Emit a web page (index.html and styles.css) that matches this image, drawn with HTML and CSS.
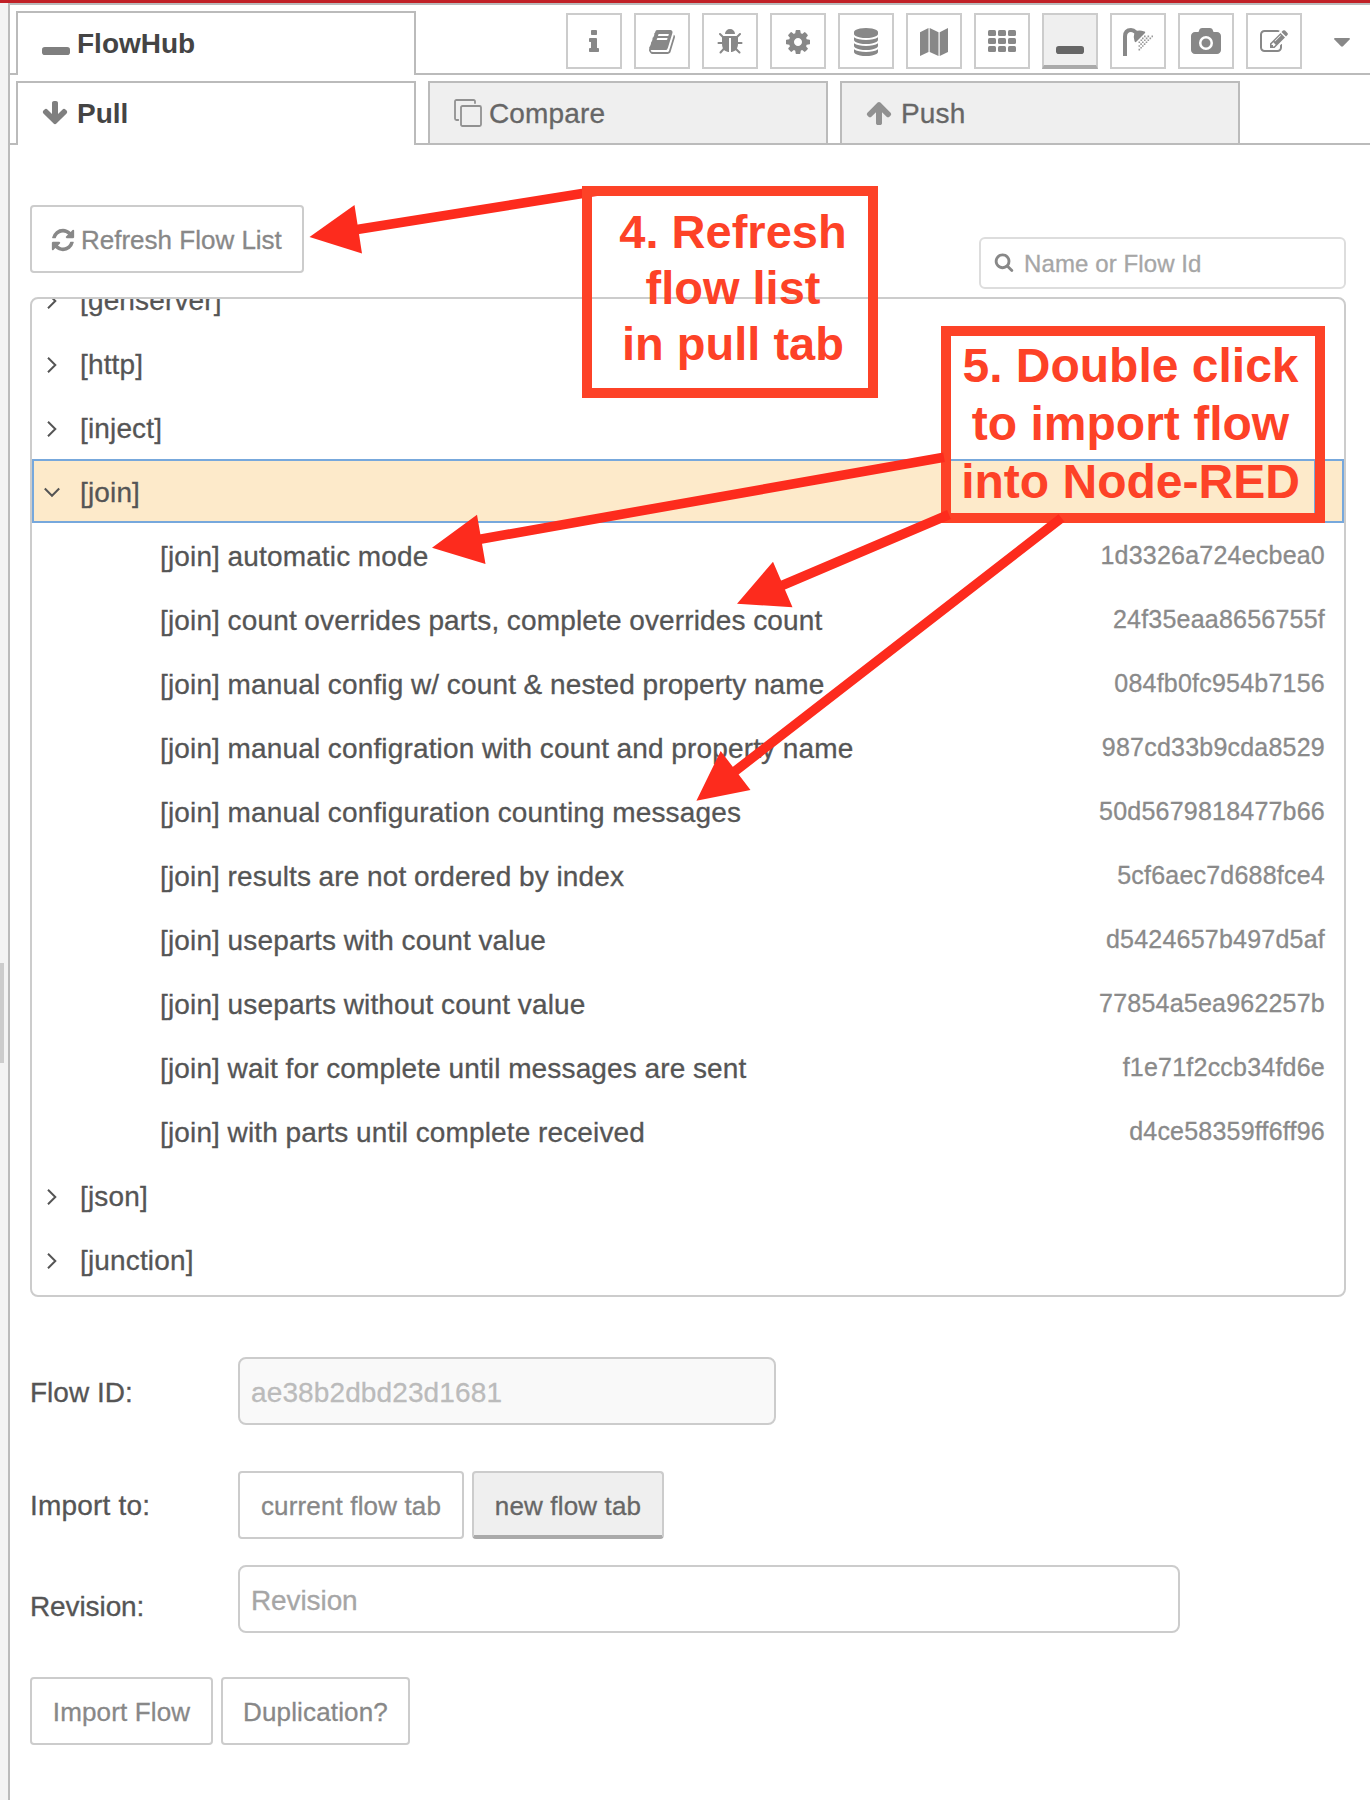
FILE: index.html
```html
<!DOCTYPE html>
<html lang="en">
<head>
<meta charset="utf-8">
<title>FlowHub</title>
<link rel="stylesheet" href="styles.css">
</head>
<body>
<div class="topbar"></div>
<div class="workspace">
  <div class="separator"><div class="grip"></div></div>
  <main class="sidebar">
    <header class="tabbar">
      <div class="tab active"><svg class="icon" viewBox="0 0 28 28"><rect x="0" y="18" width="28" height="8" rx="2.8"/></svg><span>FlowHub</span></div>
      <nav class="tools">
        <a class="tool"><svg class="icon" viewBox="0 0 1792 1792"><path d="M1216 1344v128q0 26-19 45t-45 19h-512q-26 0-45-19t-19-45v-128q0-26 19-45t45-19h64v-384h-64q-26 0-45-19t-19-45v-128q0-26 19-45t45-19h384q26 0 45 19t19 45v576h64q26 0 45 19t19 45zm-128-1152v192q0 26-19 45t-45 19h-256q-26 0-45-19t-19-45v-192q0-26 19-45t45-19h256q26 0 45 19t19 45z"/></svg></a>
        <a class="tool"><svg class="icon" viewBox="0 0 1792 1792"><path d="M1703 478q40 57 18 129l-275 906q-19 64-76.500 107.500t-122.500 43.500h-923q-77 0-148.500-53.500t-99.500-131.500q-24-67-2-127 0-4 3-27t4-37q1-8-3-21.500t-3-19.500q2-11 8-21t16.500-23.500 16.500-23.500q23-38 45-91.500t30-91.500q3-10 .5-30t-.5-28q3-11 17-28t17-23q21-36 42-92t25-90q1-9-2.500-32t.5-28q4-13 22-30.500t22-22.500q19-26 42.500-84.500t27.500-96.500q1-8-3-25.500t-2-26.500q2-8 9-18t18-23 17-21q8-12 16.500-30.500t15-35 16-36 19.500-32 26.500-23.500 36-11.500 47.500 5.500l-1 3q38-9 51-9h761q74 0 114 56t18 130l-274 906q-36 119-71.500 153.500t-128.500 34.500h-869q-27 0-38 15-11 16-1 43 24 70 144 70h923q29 0 56-15.500t35-41.500l300-987q7-22 5-57 38 15 59 43zm-1064 2q-4 13 2 22.500t20 9.500h608q13 0 25.500-9.500t16.500-22.500l21-64q4-13-2-22.500t-20-9.500h-608q-13 0-25.500 9.500t-16.500 22.500zm-83 256q-4 13 2 22.500t20 9.500h608q13 0 25.500-9.500t16.500-22.500l21-64q4-13-2-22.500t-20-9.500h-608q-13 0-25.500 9.500t-16.500 22.500z"/></svg></a>
        <a class="tool"><svg class="icon" viewBox="0 0 1792 1792"><path d="M1696 960q0 26-19 45t-45 19h-224q0 171-67 290l208 209q19 19 19 45t-19 45q-18 19-45 19t-45-19l-198-197q-5 5-15 13t-42 28.500-65 36.500-82 29-97 13v-896h-128v896q-51 0-101.500-13.500t-87-33-66-39-43.500-32.500l-15-14-183 207q-20 21-48 21-24 0-43-16-19-18-20.500-44.500t15.500-46.500l202-227q-58-114-58-274h-224q-26 0-45-19t-19-45 19-45 45-19h224v-294l-173-173q-19-19-19-45t19-45 45-19 45 19l173 173h844l173-173q19-19 45-19t45 19 19 45-19 45l-173 173v294h224q26 0 45 19t19 45zm-480-576h-640q0-133 93.500-226.500t226.500-93.500 226.500 93.500 93.500 226.500z"/></svg></a>
        <a class="tool"><svg class="icon" viewBox="0 0 1792 1792"><path d="M1152 896q0-106-75-181t-181-75-181 75-75 181 75 181 181 75 181-75 75-181zm512-109v222q0 12-8 23t-20 13l-185 28q-19 54-39 91 35 50 107 138 10 12 10 25t-9 23q-27 37-99 108t-94 71q-12 0-26-9l-138-108q-44 23-91 38-16 136-29 186-7 28-36 28h-222q-14 0-24.500-8.500t-11.500-21.500l-28-184q-49-16-90-37l-141 107q-10 9-25 9-14 0-25-11-126-114-165-168-7-10-7-23 0-12 8-23 15-21 51-66.500t54-70.500q-27-50-41-99l-183-27q-13-2-21-12.500t-8-23.500v-222q0-12 8-23t19-13l186-28q14-46 39-92-40-57-107-138-10-12-10-24 0-10 9-23 26-36 98.500-107.500t94.500-71.500q13 0 26 10l138 107q44-23 91-38 16-136 29-186 7-28 36-28h222q14 0 24.500 8.500t11.500 21.500l28 184q49 16 90 37l142-107q9-9 24-9 13 0 25 10 129 119 165 170 7 8 7 22 0 12-8 23-15 21-51 66.500t-54 70.500q26 50 41 98l183 28q13 2 21 12.500t8 23.500z"/></svg></a>
        <a class="tool"><svg class="icon" viewBox="0 0 1792 1792"><path d="M896 768q237 0 443-43t325-127v170q0 69-103 128t-280 93.500-385 34.500-385-34.500-280-93.500-103-128v-170q119 84 325 127t443 43zm0 768q237 0 443-43t325-127v170q0 69-103 128t-280 93.500-385 34.500-385-34.500-280-93.500-103-128v-170q119 84 325 127t443 43zm0-384q237 0 443-43t325-127v170q0 69-103 128t-280 93.500-385 34.500-385-34.500-280-93.500-103-128v-170q119 84 325 127t443 43zm0-1152q208 0 385 34.500t280 93.500 103 128v128q0 69-103 128t-280 93.500-385 34.500-385-34.500-280-93.500-103-128v-128q0-69 103-128t280-93.500 385-34.500z"/></svg></a>
        <a class="tool"><svg class="icon" viewBox="0 0 28 28"><path d="M0 4.300L8.500 0V24L0 28zM9.700 0L18.500 4.300V28L9.700 24zM19.700 4.300L28 0V24L19.700 28z"/></svg></a>
        <a class="tool"><svg class="icon" viewBox="0 0 28 28"><rect x="0" y="2" width="8" height="6" rx="1.500"/><rect x="10" y="2" width="8" height="6" rx="1.500"/><rect x="20" y="2" width="8" height="6" rx="1.500"/><rect x="0" y="10" width="8" height="6" rx="1.500"/><rect x="10" y="10" width="8" height="6" rx="1.500"/><rect x="20" y="10" width="8" height="6" rx="1.500"/><rect x="0" y="18" width="8" height="6" rx="1.500"/><rect x="10" y="18" width="8" height="6" rx="1.500"/><rect x="20" y="18" width="8" height="6" rx="1.500"/></svg></a>
        <a class="tool selected"><svg class="icon" viewBox="0 0 28 28"><rect x="0" y="18" width="28" height="8" rx="2.800"/></svg></a>
        <a class="tool"><svg class="icon wide" viewBox="0 0 30 28"><path d="M0 28V8.500Q0 0 8 0Q11.500 0 14 2.800Q17.500 2 20.500 3.200Q22.800 3.300 22 5L13 14Q11.800 14.500 11.500 13Q10 9.500 11.300 5.500Q10 4 8 4Q4 4 4 8.500V28z"/><path d="M21 7.600h1.600v1.600h-1.600zM24.500 7.600h1.600v1.600h-1.600zM28.500 7.600h1.600v1.600h-1.600zM19 9.600h1.600v1.600h-1.600zM22.800 9.600h1.600v1.600h-1.600zM26.500 9.600h1.600v1.600h-1.600zM17.500 11.500h1.600v1.600h-1.600zM21 11.500h1.600v1.600h-1.600zM24.500 11.500h1.600v1.600h-1.600zM15.500 13.400h1.600v1.600h-1.600zM19 13.400h1.600v1.600h-1.600zM22.700 13.400h1.600v1.600h-1.600zM17.300 15.300h1.600v1.600h-1.600zM20.800 15.300h1.600v1.600h-1.600zM15.500 17.200h1.600v1.600h-1.600zM19 17.200h1.600v1.600h-1.600zM17.300 19h1.600v1.600h-1.600zM15.500 20.800h1.600v1.600h-1.600z" opacity=".85"/></svg></a>
        <a class="tool"><svg class="icon wide" viewBox="0 0 1920 1792"><path d="M960 672q119 0 203.500 84.500t84.500 203.500-84.500 203.500-203.500 84.500-203.500-84.500-84.500-203.500 84.500-203.500 203.500-84.500zm704-416q106 0 181 75t75 181v896q0 106-75 181t-181 75h-1408q-106 0-181-75t-75-181v-896q0-106 75-181t181-75h224l51-136q19-49 69.500-84.500t103.500-35.500h512q53 0 103.500 35.500t69.500 84.500l51 136h224zm-704 1152q185 0 316.500-131.500t131.500-316.500-131.500-316.500-316.500-131.500-316.500 131.500-131.500 316.500 131.500 316.500 316.500 131.500z"/></svg></a>
        <a class="tool"><svg class="icon" viewBox="0 0 1792 1792"><path d="M888 1184l116-116-152-152-116 116v56h96v96h56zm440-720q-16-16-33 1l-350 350q-17 17-1 33t33-1l350-350q17-17 1-33zm80 594v190q0 119-84.500 203.500t-203.500 84.500h-832q-119 0-203.500-84.500t-84.500-203.500v-832q0-119 84.500-203.500t203.500-84.500h832q63 0 117 25 15 7 18 23 3 17-9 29l-49 49q-14 14-32 8-23-6-45-6h-832q-66 0-113 47t-47 113v832q0 66 47 113t113 47h832q66 0 113-47t47-113v-126q0-13 9-22l64-64q15-15 35-7t20 29zm-96-738l288 288-672 672h-288v-288zm444 132l-92 92-288-288 92-92q28-28 68-28t68 28l152 152q28 28 28 68t-28 68z"/></svg></a>
        <svg class="caret" viewBox="0 0 16 9"><path d="M1 0H15Q16.500 .4 15.600 1.500L9 8.300Q8 9.200 7 8.300L.4 1.500Q-.5 .4 1 0z"/></svg>
      </nav>
    </header>
    <div class="tabbar subtabs">
      <div class="tab active arrow"><svg class="icon" viewBox="0 0 1792 1792"><path d="M1675 832q0 53-37 90l-651 652q-39 37-91 37-53 0-90-37l-651-652q-38-36-38-90 0-53 38-91l74-75q39-37 91-37 53 0 90 37l294 294v-704q0-52 38-90t90-38h128q52 0 90 38t38 90v704l294-294q37-37 90-37 52 0 91 37l75 75q37 39 37 91z"/></svg><span>Pull</span></div>
      <div class="tab"><svg class="icon clone" viewBox="0 0 28 28"><path d="M21 4.700V2.500Q21 1 19.500 1H2.500Q1 1 1 2.500V19.500Q1 21 2.500 21H4.900"/><rect x="7" y="7" width="20" height="20" rx="1.500"/></svg><span>Compare</span></div>
      <div class="tab arrow"><svg class="icon" viewBox="0 0 1792 1792"><path d="M1675 971q0 51-37 90l-75 75q-38 38-91 38-54 0-90-38l-294-293v704q0 52-37.500 84.500t-90.500 32.500h-128q-53 0-90.500-32.500t-37.500-84.500v-704l-294 293q-36 38-90 38t-90-38l-75-75q-38-38-38-90 0-53 38-91l651-651q35-37 90-37 54 0 91 37l651 651q37 39 37 91z"/></svg><span>Push</span></div>
    </div>
    <section class="content">
      <div class="listhead">
        <button class="btn refresh"><svg viewBox="0 0 1792 1792"><path d="M1639 1056q0 5-1 7-64 268-268 434.500t-478 166.500q-146 0-282.500-55t-243.500-157l-129 129q-19 19-45 19t-45-19-19-45v-448q0-26 19-45t45-19h448q26 0 45 19t19 45-19 45l-137 137q71 66 161 102t187 36q134 0 250-65t186-179q11-17 53-117 8-23 30-23h192q13 0 22.500 9.500t9.500 22.500zm25-800v448q0 26-19 45t-45 19h-448q-26 0-45-19t-19-45 19-45l138-138q-148-137-349-137-134 0-250 65t-186 179q-11 17-53 117-8 23-30 23h-199q-13 0-22.500-9.500t-9.500-22.500v-7q65-268 270-434.500t480-166.500q146 0 284 55.500t245 156.500l130-129q19-19 45-19t45 19 19 45z"/></svg><span>Refresh Flow List</span></button>
        <label class="search"><svg viewBox="0 0 1792 1792"><path d="M1216 832q0-185-131.500-316.500t-316.500-131.500-316.500 131.500-131.500 316.500 131.500 316.500 316.500 131.500 316.500-131.500 131.500-316.500zm512 832q0 52-38 90t-90 38q-54 0-90-38l-343-342q-179 124-399 124-143 0-273.500-55.500t-225-150-150-225-55.500-273.500 55.500-273.500 150-225 225-150 273.500-55.500 273.500 55.500 225 150 150 225 55.500 273.500q0 220-124 399l343 343q37 37 37 90z"/></svg><input type="text" placeholder="Name or Flow Id"></label>
      </div>
      <div class="list">
        <div class="rows">
          <div class="row"><svg class="chev" viewBox="0 0 16 16"><path d="M4 .8L11.300 8L4 15.200"/></svg><span>[genserver]</span></div>
          <div class="row"><svg class="chev" viewBox="0 0 16 16"><path d="M4 .8L11.300 8L4 15.200"/></svg><span>[http]</span></div>
          <div class="row"><svg class="chev" viewBox="0 0 16 16"><path d="M4 .8L11.300 8L4 15.200"/></svg><span>[inject]</span></div>
          <div class="row current"><div class="label"><svg class="chev" viewBox="0 0 16 16"><path d="M.8 3.500L8 10.800L15.200 3.500"/></svg><span>[join]</span></div></div>
          <div class="row item"><span>[join] automatic mode</span><em>1d3326a724ecbea0</em></div>
          <div class="row item"><span>[join] count overrides parts, complete overrides count</span><em>24f35eaa8656755f</em></div>
          <div class="row item"><span>[join] manual config w/ count &amp; nested property name</span><em>084fb0fc954b7156</em></div>
          <div class="row item"><span>[join] manual configration with count and property name</span><em>987cd33b9cda8529</em></div>
          <div class="row item"><span>[join] manual configuration counting messages</span><em>50d5679818477b66</em></div>
          <div class="row item"><span>[join] results are not ordered by index</span><em>5cf6aec7d688fce4</em></div>
          <div class="row item"><span>[join] useparts with count value</span><em>d5424657b497d5af</em></div>
          <div class="row item"><span>[join] useparts without count value</span><em>77854a5ea962257b</em></div>
          <div class="row item"><span>[join] wait for complete until messages are sent</span><em>f1e71f2ccb34fd6e</em></div>
          <div class="row item"><span>[join] with parts until complete received</span><em>d4ce58359ff6ff96</em></div>
          <div class="row"><svg class="chev" viewBox="0 0 16 16"><path d="M4 .8L11.300 8L4 15.200"/></svg><span>[json]</span></div>
          <div class="row"><svg class="chev" viewBox="0 0 16 16"><path d="M4 .8L11.300 8L4 15.200"/></svg><span>[junction]</span></div>
        </div>
      </div>
      <form class="form">
        <div class="field flowid"><label>Flow ID:</label><input type="text" value="ae38b2dbd23d1681" disabled></div>
        <div class="field importto"><label>Import to:</label><div class="group"><button type="button" class="btn cur">current flow tab</button><button type="button" class="btn new pressed">new flow tab</button></div></div>
        <div class="field revision"><label>Revision:</label><input type="text" placeholder="Revision"></div>
        <div class="group actions"><button type="button" class="btn imp">Import Flow</button><button type="button" class="btn dup">Duplication?</button></div>
      </form>
    </section>
  </main>
</div>
<svg class="arrows" viewBox="0 0 1370 1800"><path class="shaft" d="M357 229.500L598 191"/><path class="head" d="M309.500 237L354.500 205L362 253.500z"/></svg>
<div class="note note4">4. Refresh<br>flow list<br>in pull tab</div>
<div class="note note5">5. Double click<br>to import flow<br>into Node-RED</div>
<svg class="arrows" viewBox="0 0 1370 1800">
  <path class="shaft" d="M480 539.300L944 457.200M782 585.500L949 514.500M734 772L1061.500 518"/>
  <path class="head" d="M432 547.700L477 514.700L485.500 564zM737 603.700L773 561.700L792.500 607.300zM696.400 800.700L720.700 751L750.500 790z"/>
</svg>
</body>
</html>
```
FILE: styles.css
```css
* { box-sizing: border-box; }
body {
  margin: 0;
  height: 1800px;
  overflow: hidden;
  position: relative;
  background: #fff;
  color: #555;
  font: 28px "Liberation Sans", Arial, sans-serif;
  letter-spacing: .15px;
  -webkit-text-stroke-width: .3px;
}
.topbar { height: 3px; background: #c12127; }
.workspace { display: flex; height: 1797px; }
.separator { width: 8px; background: #f3f3f3; }
.grip { width: 4px; height: 100px; margin-top: 960px; background: #ccc; }
.sidebar { flex: 1; border-left: 2px solid #bbb; border-top: 2px solid #bbb; }

.tabbar {
  display: flex;
  height: 70px;
  padding: 6px 0 0 6px;
  border-bottom: 2px solid #bbb;
}
.subtabs { gap: 12px; }
.tab {
  display: flex;
  width: 400px;
  height: 62px;
  padding-left: 24px;
  border: 2px solid #bbb;
  border-bottom: 0;
  background: #efefef;
  color: #666;
  line-height: 62px;
}
.tab.active {
  height: 64px;
  background: #fff;
  color: #444;
  font-weight: bold;
  letter-spacing: 0;
  -webkit-text-stroke-width: 0;
}
.tab span { margin-left: 7px; }
.tab .icon { margin-top: 16px; fill: #919191; }
.tab.active .icon { fill: #7f7f7f; }
.tab.arrow { padding-left: 23px; }
.tab.arrow span { margin-left: 8px; }
.icon { width: 28px; height: 28px; fill: #888; flex: none; }
.icon.wide { width: 30px; }
.tab .clone { fill: none; stroke: #919191; stroke-width: 1.8; }

.tools { display: flex; gap: 12px; margin: 2px 0 0 150px; }
.tool {
  display: flex;
  justify-content: center;
  width: 56px;
  height: 56px;
  padding-top: 13px;
  border: 2px solid #ccc;
  background: #fff;
}
.tool.selected { background: #efefef; border-bottom: 4px solid #aaa; }
.tool.selected .icon { fill: #666; }
.caret { width: 16px; height: 9px; margin: 25px 0 0 20px; fill: #888; }

.content { padding: 60px 24px 0 20px; }
.listhead { display: flex; justify-content: space-between; height: 92px; }
.btn {
  height: 68px;
  padding: 2px 0 0;
  border: 2px solid #ccc;
  border-radius: 4px;
  background: #fff;
  color: #888;
  font: 26px "Liberation Sans", Arial, sans-serif;
  letter-spacing: .15px;
}
.btn.pressed { background: #efefef; color: #666; border-bottom: 4px solid #aaa; padding-top: 4px; }
.refresh { display: flex; align-items: center; width: 274px; padding-left: 18px; }
.refresh svg { width: 26px; height: 26px; fill: #888; }
.refresh span { margin-left: 5px; white-space: nowrap; letter-spacing: 0; }
.search {
  display: flex;
  width: 367px;
  height: 52px;
  margin-top: 32px;
  padding-left: 13px;
  border: 2px solid #ddd;
  border-radius: 6px;
}
.search svg { width: 20px; height: 20px; margin-top: 13px; fill: #888; }
.search input {
  flex: 1;
  min-width: 0;
  margin-left: 10px;
  padding: 2px 0 0;
  border: 0;
  background: none;
  font: 24px "Liberation Sans", Arial, sans-serif;
  letter-spacing: .1px;
}
input::placeholder { color: #a6a6a6; opacity: 1; }

.list { height: 1000px; border: 2px solid #ccc; border-radius: 8px; overflow: hidden; }
.rows { margin-top: -32px; }
.row { display: flex; height: 64px; padding-left: 12px; line-height: 68px; white-space: nowrap; }
.chev { width: 16px; height: 16px; margin: 26px 20px 0 0; fill: none; stroke: #555; stroke-width: 2; }
.row.current { padding: 0; background: #fdeaca; border: 2px solid #77a8dc; line-height: 64px; }
.row.current .label { display: flex; width: 1282px; padding-left: 10px; border-right: 2px solid #77a8dc; }
.row.current .chev { margin-top: 24px; }
.row.item { justify-content: space-between; padding: 0 19px 0 128px; word-spacing: -.4px; }
.row em { font-style: normal; font-size: 25px; line-height: 64px; color: #8a8a8a; letter-spacing: .22px; }

.form { padding-top: 60px; }
.field { display: flex; height: 68px; }
.field label { width: 208px; line-height: 72px; letter-spacing: 0; }
.field input {
  width: 538px;
  padding: 4px 12px 0 11px;
  border: 2px solid #ccc;
  border-radius: 8px;
  background: #fff;
  font: 28px "Liberation Sans", Arial, sans-serif;
  letter-spacing: .12px;
}
.field input:disabled { background: #f9f9f9; color: #bbb; }
.importto { margin-top: 46px; }
.importto label { line-height: 70px; letter-spacing: .2px; }
.revision { margin-top: 26px; }
.revision input { width: 942px; letter-spacing: -.1px; }
.revision label { padding-top: 6px; letter-spacing: -.1px; }
.group { display: flex; gap: 8px; }
.cur { width: 226px; }
.new { width: 192px; }
.actions { margin-top: 44px; }
.imp { width: 183px; }
.dup { width: 189px; }

/* Annotations drawn over the panel */
.note {
  position: absolute;
  border: 10px solid #fd4227;
  color: #fd4227;
  font-weight: bold;
  text-align: center;
  white-space: nowrap;
  letter-spacing: 0;
  -webkit-text-stroke-width: 0;
}
.note4 { left: 582px; top: 186px; width: 296px; height: 212px; padding: 8px 0 0 6px; font-size: 47px; line-height: 56px; }
.note5 { left: 941px; top: 326px; width: 384px; height: 197px; padding: 1px 5px 0 0; font-size: 48px; line-height: 58px; }
.arrows { position: absolute; left: 0; top: 0; width: 1370px; height: 1800px; pointer-events: none; }
.shaft { fill: none; stroke: #fd2b1d; stroke-width: 9.6; }
.head { fill: #fd2b1d; }
```
